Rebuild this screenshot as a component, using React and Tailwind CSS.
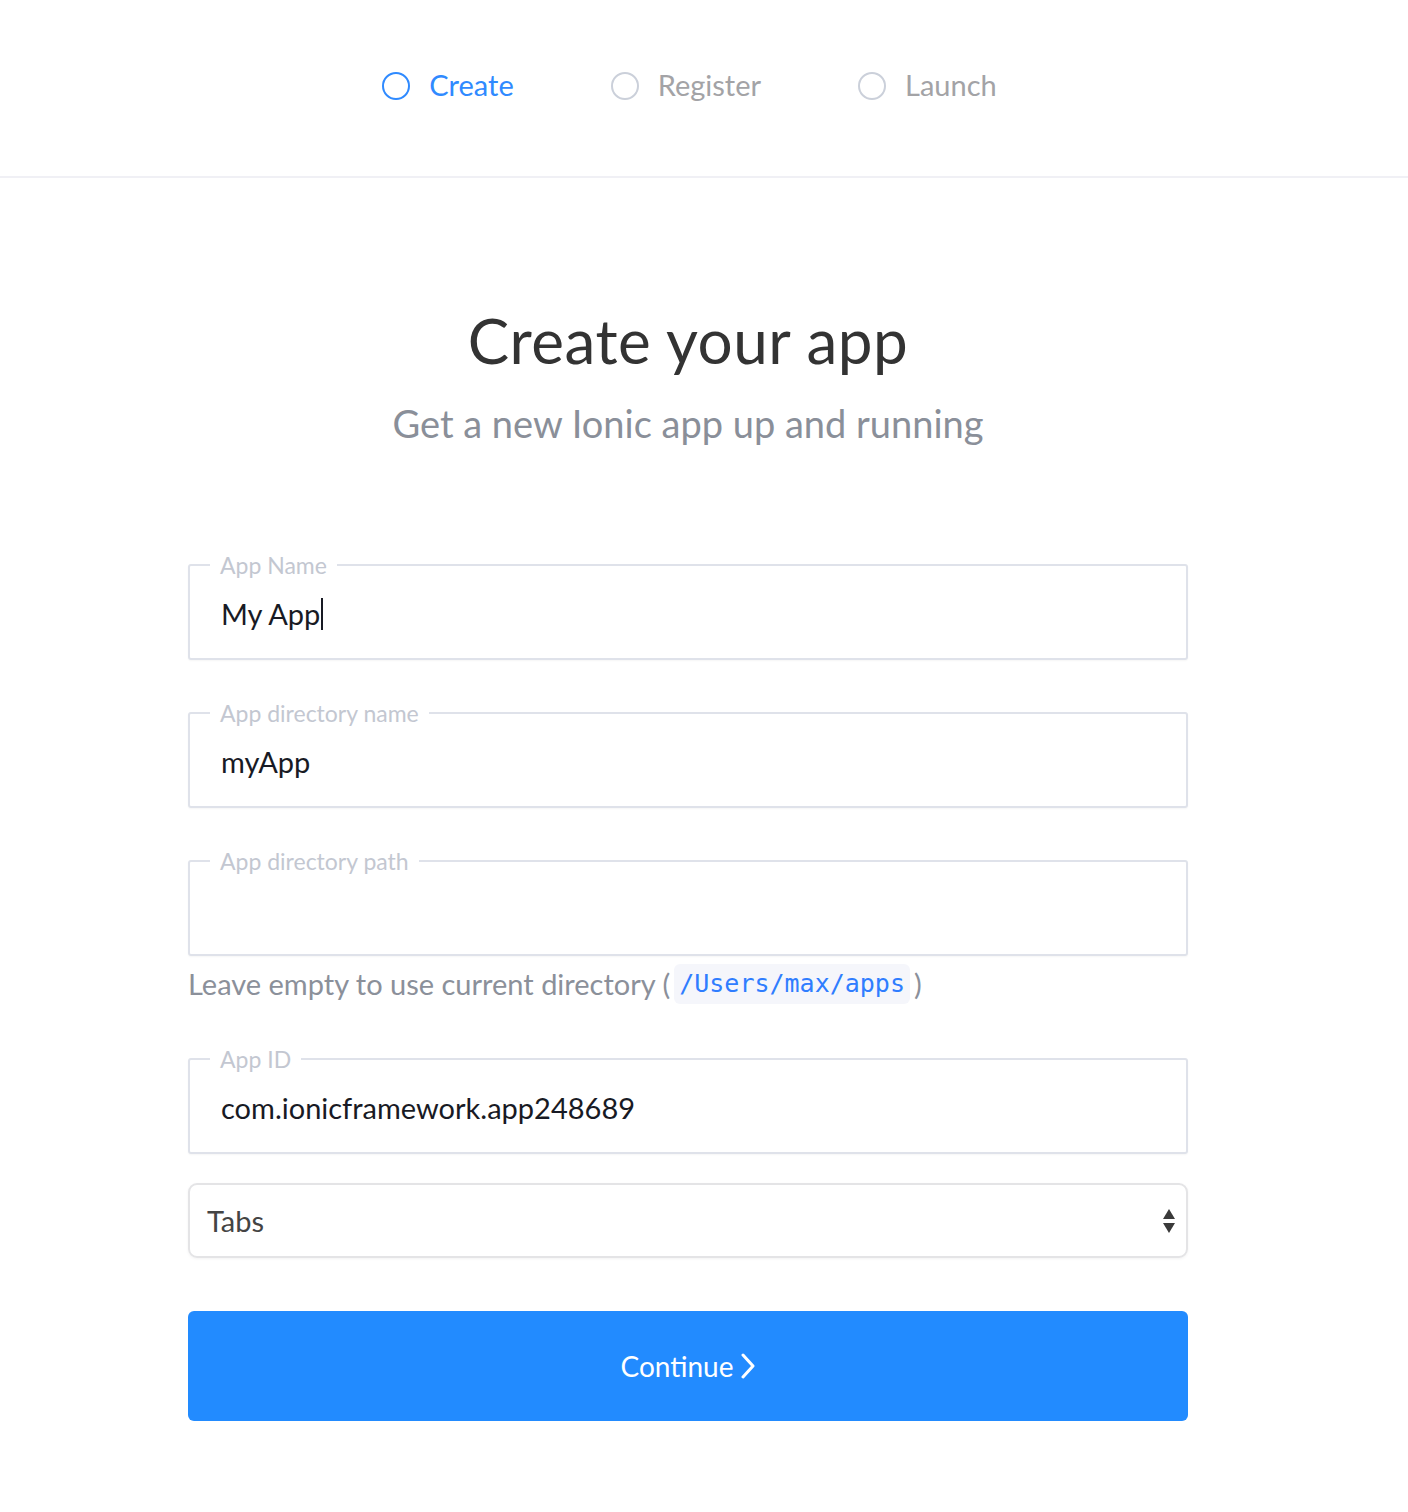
import React from "react";

function Step({ label, active }) {
  return (
    <div className="flex items-center gap-[19px]">
      <span
        className={
          "block w-[28px] h-[28px] rounded-full border-2 " +
          (active ? "border-[#2f8aff]" : "border-[#cbd0da]")
        }
      />
      <span className={"text-[29px] leading-none pb-[3px] " + (active ? "text-[#2f8aff]" : "text-[#a3a3a6]")}>
        {label}
      </span>
    </div>
  );
}

function Field({ label, value, caret }) {
  return (
    <fieldset className="border-2 border-[#dfe2ea] rounded-[3px] pl-[31px] pr-[31px] pb-[7px] shadow-[0_1px_2px_rgba(0,0,0,0.04)]">
      <legend className="ml-[-11px] px-[10px] text-[23px] leading-[24px] text-[#c3c7d1]">{label}</legend>
      <div className="h-[74px] flex items-center text-[29px] text-[#181a24]">
        <span>{value}</span>
        {caret && <span className="inline-block w-[2px] h-[32px] bg-[#181a24] ml-[1px]" />}
      </div>
    </fieldset>
  );
}

export default function App() {
  return (
    <div className="min-h-[1512px] bg-white" style={{ fontFamily: "Lato, 'Noto Sans', sans-serif" }}>
      <header className="h-[178px] border-b-2 border-[#f0f0f5]">
        <div className="w-[1376px] h-full flex items-center justify-center gap-[97px] pb-[4px] pl-[3px]">
          <Step label="Create" active />
          <Step label="Register" />
          <Step label="Launch" />
        </div>
      </header>
      <main className="w-[1376px] flex flex-col items-center">
        <h1 className="mt-[126px] text-[62px] leading-[72px] text-[#333333] tracking-[0.5px]">Create your app</h1>
        <p className="mt-[25px] text-[38px] leading-[44px] text-[#8a8f99]">Get a new Ionic app up and running</p>
        <div className="w-[1000px] mt-[108px] flex flex-col">
          <Field label="App Name" value="My App" caret />
          <div className="h-[41px]" />
          <Field label="App directory name" value="myApp" />
          <div className="h-[41px]" />
          <Field label="App directory path" value="" />
          <div className="mt-[8px] flex items-center text-[29px] leading-[36px] text-[#8b909a]">
            <span>Leave empty to use current directory (</span>
            <code
              className="mx-[4px] px-[5px] py-[2px] rounded-[6px] bg-[#f5f6fb] text-[#2f7dff] text-[25px]"
              style={{ fontFamily: "'DejaVu Sans Mono', monospace" }}
            >
              /Users/max/apps
            </code>
            <span>)</span>
          </div>
          <div className="h-[43px]" />
          <Field label="App ID" value="com.ionicframework.app248689" />
          <div className="mt-[29px] h-[75px] border-2 border-[#e4e4e6] rounded-[9px] flex items-center justify-between pl-[17px] pr-[10px] shadow-[0_1px_3px_rgba(0,0,0,0.05)]">
            <span className="text-[29px] text-[#444444]">Tabs</span>
            <svg width="14" height="28" viewBox="0 0 14 28">
              <path d="M7 2 L13 12 L1 12 Z" fill="#3a3a3a" />
              <path d="M1 16 L13 16 L7 26 Z" fill="#3a3a3a" />
            </svg>
          </div>
          <button className="mt-[53px] h-[110px] w-full rounded-[6px] bg-[#228bff] text-white flex items-center justify-center gap-[6px]">
            <span className="text-[28px]">Continue</span>
            <svg width="16" height="26" viewBox="0 0 16 26" fill="none">
              <path d="M3 2 L13 13 L3 24" stroke="white" strokeWidth="3" strokeLinecap="round" strokeLinejoin="round" />
            </svg>
          </button>
        </div>
      </main>
    </div>
  );
}
